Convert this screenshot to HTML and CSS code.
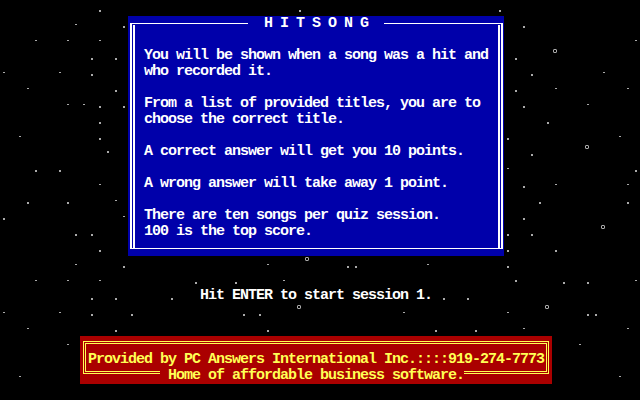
FILE: index.html
```html
<!DOCTYPE html>
<html>
<head>
<meta charset="utf-8">
<title>HITSONG</title>
<link rel="stylesheet" href="styles.css">
</head>
<body>
<div class="screen">
  <div class="stars">
    <span class="s d" style="left:99px;top:10px"></span>
    <span class="s d" style="left:299px;top:10px"></span>
    <span class="s d" style="left:123px;top:26px"></span>
    <span class="s d" style="left:91px;top:58px"></span>
    <span class="s d" style="left:115px;top:58px"></span>
    <span class="s d" style="left:91px;top:74px"></span>
    <span class="s d" style="left:115px;top:90px"></span>
    <span class="s d" style="left:99px;top:106px"></span>
    <span class="s d" style="left:123px;top:106px"></span>
    <span class="s d" style="left:99px;top:122px"></span>
    <span class="s d" style="left:99px;top:138px"></span>
    <span class="s d" style="left:107px;top:151px"></span>
    <span class="s d" style="left:35px;top:170px"></span>
    <span class="s d" style="left:59px;top:170px"></span>
    <span class="s d" style="left:499px;top:10px"></span>
    <span class="s d" style="left:523px;top:26px"></span>
    <span class="s d" style="left:515px;top:58px"></span>
    <span class="s d" style="left:531px;top:74px"></span>
    <span class="s d" style="left:515px;top:90px"></span>
    <span class="s d" style="left:523px;top:106px"></span>
    <span class="s d" style="left:547px;top:122px"></span>
    <span class="s d" style="left:507px;top:138px"></span>
    <span class="s d" style="left:531px;top:154px"></span>
    <span class="s d" style="left:635px;top:170px"></span>
    <span class="s d" style="left:523px;top:186px"></span>
    <span class="s d" style="left:27px;top:202px"></span>
    <span class="s d" style="left:67px;top:202px"></span>
    <span class="s d" style="left:3px;top:218px"></span>
    <span class="s d" style="left:75px;top:234px"></span>
    <span class="s d" style="left:91px;top:234px"></span>
    <span class="s d" style="left:99px;top:250px"></span>
    <span class="s d" style="left:123px;top:266px"></span>
    <span class="s d" style="left:195px;top:282px"></span>
    <span class="s d" style="left:235px;top:282px"></span>
    <span class="s d" style="left:91px;top:298px"></span>
    <span class="s d" style="left:115px;top:298px"></span>
    <span class="s d" style="left:171px;top:298px"></span>
    <span class="s d" style="left:91px;top:314px"></span>
    <span class="s d" style="left:131px;top:314px"></span>
    <span class="s d" style="left:243px;top:314px"></span>
    <span class="s d" style="left:259px;top:314px"></span>
    <span class="s d" style="left:115px;top:330px"></span>
    <span class="s d" style="left:267px;top:330px"></span>
    <span class="s d" style="left:539px;top:202px"></span>
    <span class="s d" style="left:627px;top:202px"></span>
    <span class="s d" style="left:523px;top:218px"></span>
    <span class="s d" style="left:507px;top:234px"></span>
    <span class="s d" style="left:531px;top:234px"></span>
    <span class="s d" style="left:507px;top:250px"></span>
    <span class="s d" style="left:555px;top:250px"></span>
    <span class="s d" style="left:347px;top:266px"></span>
    <span class="s d" style="left:355px;top:266px"></span>
    <span class="s d" style="left:507px;top:266px"></span>
    <span class="s d" style="left:515px;top:280px"></span>
    <span class="s d" style="left:563px;top:282px"></span>
    <span class="s d" style="left:587px;top:282px"></span>
    <span class="s d" style="left:443px;top:298px"></span>
    <span class="s d" style="left:467px;top:298px"></span>
    <span class="s d" style="left:587px;top:314px"></span>
    <span class="s d" style="left:595px;top:314px"></span>
    <span class="s d" style="left:435px;top:330px"></span>
    <span class="s d" style="left:475px;top:330px"></span>
    <span class="s h" style="left:75px;top:24px"></span>
    <span class="s h" style="left:35px;top:40px"></span>
    <span class="s h" style="left:67px;top:40px"></span>
    <span class="s h" style="left:99px;top:40px"></span>
    <span class="s h" style="left:3px;top:72px"></span>
    <span class="s h" style="left:59px;top:72px"></span>
    <span class="s h" style="left:27px;top:88px"></span>
    <span class="s h" style="left:67px;top:104px"></span>
    <span class="s h" style="left:83px;top:104px"></span>
    <span class="s h" style="left:19px;top:136px"></span>
    <span class="s h" style="left:99px;top:184px"></span>
    <span class="s h" style="left:635px;top:40px"></span>
    <span class="s h" style="left:603px;top:72px"></span>
    <span class="s h" style="left:555px;top:88px"></span>
    <span class="s h" style="left:627px;top:88px"></span>
    <span class="s h" style="left:587px;top:104px"></span>
    <span class="s h" style="left:619px;top:136px"></span>
    <span class="s h" style="left:507px;top:168px"></span>
    <span class="s h" style="left:555px;top:184px"></span>
    <span class="s h" style="left:627px;top:184px"></span>
    <span class="s h" style="left:115px;top:200px"></span>
    <span class="s h" style="left:123px;top:216px"></span>
    <span class="s h" style="left:75px;top:264px"></span>
    <span class="s h" style="left:267px;top:264px"></span>
    <span class="s h" style="left:35px;top:280px"></span>
    <span class="s h" style="left:67px;top:280px"></span>
    <span class="s h" style="left:99px;top:280px"></span>
    <span class="s h" style="left:283px;top:280px"></span>
    <span class="s h" style="left:3px;top:312px"></span>
    <span class="s h" style="left:59px;top:312px"></span>
    <span class="s h" style="left:27px;top:328px"></span>
    <span class="s h" style="left:67px;top:344px"></span>
    <span class="s h" style="left:19px;top:376px"></span>
    <span class="s h" style="left:427px;top:264px"></span>
    <span class="s h" style="left:635px;top:280px"></span>
    <span class="s h" style="left:403px;top:312px"></span>
    <span class="s h" style="left:507px;top:312px"></span>
    <span class="s h" style="left:523px;top:328px"></span>
    <span class="s h" style="left:627px;top:328px"></span>
    <span class="s h" style="left:579px;top:344px"></span>
    <span class="s h" style="left:619px;top:376px"></span>
    <span class="s o" style="left:553px;top:49px"></span>
    <span class="s o" style="left:585px;top:145px"></span>
    <span class="s o" style="left:305px;top:257px"></span>
    <span class="s o" style="left:297px;top:305px"></span>
    <span class="s o" style="left:601px;top:225px"></span>
    <span class="s o" style="left:545px;top:305px"></span>
  </div>

  <section class="panel">
    <div class="frame"></div>
    <h1 class="title"><span>H I T S O N G</span></h1>
    <div class="body">
      <p>You will be shown when a song was a hit and<br>who recorded it.</p>
      <p>From a list of provided titles, you are to<br>choose the correct title.</p>
      <p>A correct answer will get you 10 points.</p>
      <p>A wrong answer will take away 1 point.</p>
      <p>There are ten songs per quiz session.<br>100 is the top score.</p>
    </div>
  </section>

  <p class="prompt">Hit ENTER to start session 1.</p>

  <footer class="credit">
    <div class="credit-frame"></div>
    <p class="credit-line">Provided by PC Answers International Inc.::::919-274-7773</p>
    <p class="credit-tag"><span>Home of affordable business software.</span></p>
  </footer>
</div>
</body>
</html>
```

FILE: styles.css
```css
html, body {
  margin: 0;
  padding: 0;
  background: #000;
}

body {
  width: 640px;
  height: 400px;
  overflow: hidden;
  font-family: "Liberation Mono", "DejaVu Sans Mono", monospace;
  font-weight: bold;
  font-size: 15px;
  line-height: 16px;
  letter-spacing: -1px;
  color: #fff;
}

.screen {
  position: relative;
  width: 640px;
  height: 400px;
  padding-top: 16px;
  box-sizing: border-box;
}

.stars {
  position: absolute;
  inset: 0;
}

.s {
  position: absolute;
  background: #aaa;
}

.d {
  width: 2px;
  height: 2px;
}

.h {
  width: 2px;
  height: 1px;
}

.o {
  width: 4px;
  height: 4px;
  box-sizing: border-box;
  border: 1px solid #aaa;
  border-radius: 1px;
  background: transparent;
}

.panel {
  position: relative;
  margin-left: 128px;
  width: 376px;
  height: 240px;
  background: #0000aa;
}

.frame {
  position: absolute;
  top: 7px;
  left: 2px;
  right: 1px;
  bottom: 7px;
  border: 1px solid #fff;
  border-left-width: 2px;
  border-right-width: 2px;
}

.frame::before,
.frame::after {
  content: "";
  position: absolute;
  top: 1px;
  bottom: 0;
  width: 2px;
  background: #fff;
}

.frame::before {
  left: 1px;
}

.frame::after {
  right: 1px;
}

.title {
  margin: 0;
  height: 16px;
  font: inherit;
  text-align: center;
}

.title span {
  position: relative;
  display: inline-block;
  height: 16px;
  padding: 0 16px;
  background: #0000aa;
}

.body {
  position: relative;
  padding: 16px 0 0 16px;
}

.body p {
  margin: 0 0 16px;
}

.prompt {
  margin: 32px 0 0 200px;
  height: 16px;
}

.credit {
  position: relative;
  margin: 32px 0 0 80px;
  width: 472px;
  height: 48px;
  padding-top: 16px;
  box-sizing: border-box;
  background: #aa0000;
  color: #ffff55;
}

.credit-frame {
  position: absolute;
  left: 3px;
  top: 5px;
  width: 466px;
  height: 33px;
  box-sizing: border-box;
  border: 3px double #ffff55;
}

.credit p {
  position: relative;
  margin: 0;
  height: 16px;
}

.credit-line {
  padding-left: 8px;
}

.credit-tag {
  padding-left: 80px;
}

.credit-tag span {
  display: inline-block;
  height: 16px;
  padding-left: 8px;
  background: #aa0000;
}
```
